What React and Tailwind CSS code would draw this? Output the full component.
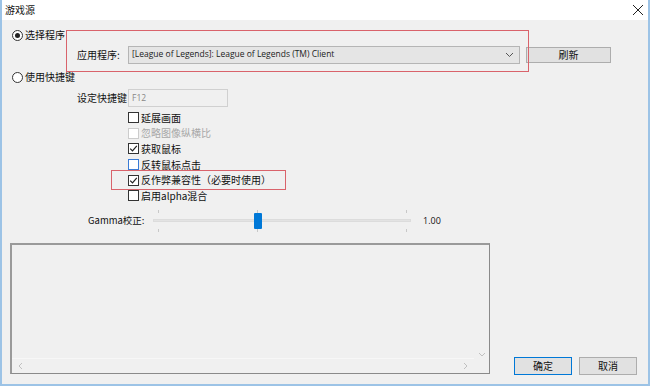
import React from "react";

const cjk = { fontFamily: '"Microsoft YaHei","Noto Sans CJK SC","Noto Sans",sans-serif' };
const latin = { fontFamily: '"Open Sans","Noto Sans",sans-serif' };

function Radio({ checked, label }) {
  return (
    <div className="flex items-center h-[14px]">
      <div className="w-[11px] h-[11px] rounded-full border border-[#333] bg-white flex items-center justify-center">
        {checked && <div className="w-[5px] h-[5px] rounded-full bg-[#222]" />}
      </div>
      <span className="ml-[2px] text-[10px] text-[#111] leading-none whitespace-nowrap">{label}</span>
    </div>
  );
}

function Check({ checked, label, disabled, blue }) {
  return (
    <div className="flex items-center h-[15.6px]">
      <div
        className={
          "w-[11px] h-[11px] border bg-white flex items-center justify-center " +
          (disabled ? "border-[#ccc]" : blue ? "border-[#3a7bd5]" : "border-[#333]")
        }
      >
        {checked && (
          <svg width="9" height="9" viewBox="0 0 9 9">
            <path d="M1.2 4.6 L3.5 6.9 L7.8 1.8" fill="none" stroke="#222" strokeWidth="1.2" />
          </svg>
        )}
      </div>
      <span className={"ml-[2px] text-[10px] leading-none whitespace-nowrap " + (disabled ? "text-[#a8a8a8]" : "text-[#111]")}>{label}</span>
    </div>
  );
}

export default function App() {
  return (
    <div className="w-[650px] h-[386px] bg-[#f0f0f0] relative overflow-hidden" style={cjk}>
      <div className="absolute inset-0 border-l-2 border-r-2 border-b-2 border-[#9cc3e6] pointer-events-none z-10" />
      <div className="h-[20px] bg-white flex items-center justify-between pl-[5px] pr-[6px]">
        <span className="text-[10px] text-[#111] leading-none">游戏源</span>
        <svg width="12" height="12" viewBox="0 0 12 12">
          <path d="M1 1 L11 11 M11 1 L1 11" stroke="#222" strokeWidth="1" />
        </svg>
      </div>

      <div className="pl-[12px] pt-[8px]">
        <Radio checked label="选择程序" />
        <div className="relative flex items-center mt-[4px] h-[17px]">
          <div className="absolute left-[54px] top-[-16px] w-[463px] h-[42px] border border-[#d9636b]" />
          <span className="ml-[65px] w-[51px] text-[10px] text-[#111] leading-none whitespace-nowrap">应用程序:</span>
          <div className="w-[392px] h-[18px] border border-[#b5b5b5] bg-[#e5e5e5] flex items-center justify-between pl-[3px] pr-[5px]">
            <span className="text-[8.5px] text-[#222] leading-none whitespace-nowrap" style={latin}>
              [League of Legends]: League of Legends (TM) Client
            </span>
            <svg width="9" height="6" viewBox="0 0 9 6">
              <path d="M1 1 L4.5 4.5 L8 1" fill="none" stroke="#555" strokeWidth="1" />
            </svg>
          </div>
          <div className="ml-[6px] w-[85px] h-[16px] border border-[#adadad] bg-[#e1e1e1] flex items-center justify-center text-[10px] text-[#111] leading-none">
            刷新
          </div>
        </div>

        <div className="mt-[7px]">
          <Radio label="使用快捷键" />
        </div>

        <div className="flex items-center mt-[5px] h-[18px]">
          <span className="ml-[65px] w-[51px] text-[10px] text-[#111] leading-none whitespace-nowrap">设定快捷键</span>
          <div className="w-[100px] h-[18px] border border-[#d0d0d0] bg-[#f0f0f0] flex items-center pl-[3px]">
            <span className="text-[8.5px] text-[#888] leading-none" style={latin}>F12</span>
          </div>
        </div>

        <div className="relative ml-[116px] mt-[3px] flex flex-col">
          <div className="absolute left-[-17px] top-[60px] w-[175px] h-[20px] border border-[#d9636b]" />
          <Check label="延展画面" />
          <Check label="忽略图像纵横比" disabled />
          <Check label="获取鼠标" checked />
          <Check label="反转鼠标点击" blue />
          <Check label="反作弊兼容性（必要时使用）" checked />
          <Check label="启用alpha混合" />
        </div>

        <div className="flex items-center mt-[6px] h-[22px]">
          <span className="ml-[76px] w-[65px] text-[9.5px] text-[#111] leading-none whitespace-nowrap">Gamma校正:</span>
          <div className="relative w-[258px] h-[22px] flex items-center">
            <div className="w-full h-[3px] bg-[#e3e3e3] border border-[#dcdcdc]" />
            <div className="absolute left-[5px] top-[0px] w-px h-[3px] bg-[#c8c8c8]" />
            <div className="absolute left-[5px] bottom-[0px] w-px h-[3px] bg-[#c8c8c8]" />
            <div className="absolute left-[104px] top-[0px] w-px h-[3px] bg-[#c8c8c8]" />
            <div className="absolute left-[104px] bottom-[0px] w-px h-[3px] bg-[#c8c8c8]" />
            <div className="absolute left-[253px] top-[0px] w-px h-[3px] bg-[#c8c8c8]" />
            <div className="absolute left-[253px] bottom-[0px] w-px h-[3px] bg-[#c8c8c8]" />
            <div className="absolute left-[101px] top-[3px] w-[8px] h-[16px] bg-[#0078d7] rounded-[1px]" />
          </div>
          <span className="ml-[12px] text-[9px] text-[#111] leading-none" style={latin}>1.00</span>
        </div>
      </div>

      <div className="flex items-end pl-[10px] mt-[11px]">
        <div className="w-[480px] h-[131px] border-t-2 border-l-2 border-[#9a9a9a] border-r border-b border-r-[#8a8a8a] border-b-[#8a8a8a] bg-[#f0f0f0] relative">
          <div className="absolute right-[3px] bottom-[15px]">
            <svg width="8" height="6" viewBox="0 0 8 6"><path d="M1 1 L4 4 L7 1" fill="none" stroke="#c0c0c0" strokeWidth="1" /></svg>
          </div>
          <div className="absolute left-0 right-[15px] bottom-0 h-[15px] bg-[#f0f0f0] border-t border-[#f7f7f7] flex items-center justify-between px-[5px]">
            <svg width="6" height="8" viewBox="0 0 6 8"><path d="M5 1 L2 4 L5 7" fill="none" stroke="#c0c0c0" strokeWidth="1" /></svg>
            <svg width="6" height="8" viewBox="0 0 6 8"><path d="M1 1 L4 4 L1 7" fill="none" stroke="#c0c0c0" strokeWidth="1" /></svg>
          </div>
        </div>
        <div className="flex gap-[7px] ml-[24px] mb-[-1px]">
          <div className="w-[58px] h-[18px] border border-[#0078d7] bg-[#e1e1e1] flex items-center justify-center text-[10px] text-[#111] leading-none">确定</div>
          <div className="w-[58px] h-[18px] border border-[#adadad] bg-[#e1e1e1] flex items-center justify-center text-[10px] text-[#111] leading-none">取消</div>
        </div>
      </div>
    </div>
  );
}
